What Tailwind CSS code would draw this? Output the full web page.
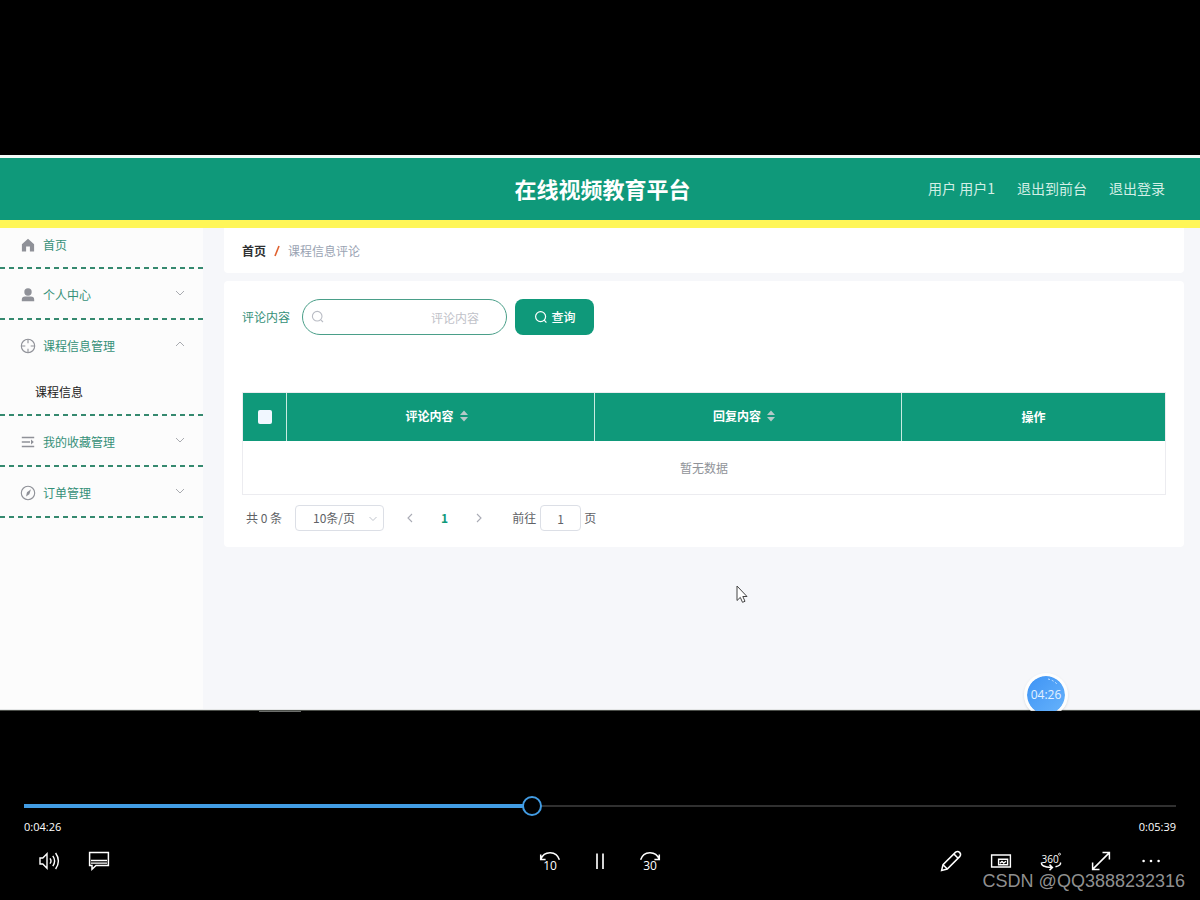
<!DOCTYPE html>
<html lang="zh-CN">
<head>
<meta charset="utf-8">
<meta name="viewport" content="width=device-width, initial-scale=1">
<title>在线视频教育平台</title>
<script src="https://cdn.jsdelivr.net/npm/@tailwindcss/browser@4"></script>
</head>
<body class="flex min-h-screen flex-col bg-black pt-[155px] font-['Noto_Sans_CJK_SC',sans-serif] text-xs">

<!-- Video picture -->
<section class="relative flex flex-col overflow-hidden border-t-3 border-[#f4fbf9] bg-[#f6f7fa]">
  <header class="grid h-[62px] grid-cols-[1fr_auto_1fr] items-center bg-[#0f997a] pb-0.5 pr-[35px] text-white">
    <span></span>
    <h1 class="ml-10 text-[22px] font-bold leading-8">在线视频教育平台</h1>
    <nav class="flex justify-end gap-[22px] text-sm text-[#d3efe6]">
      <span>用户 用户1</span>
      <a href="#">退出到前台</a>
      <a href="#">退出登录</a>
    </nav>
  </header>
  <div class="h-2 bg-[#fff658]"></div>

  <div class="flex min-h-[482px] border-b border-[#e4e6e6]">
    <aside class="w-[203px] shrink-0 bg-[#fcfcfc] text-[#359078]">
      <a href="#" class="flex h-[39px] items-center gap-[7px] pb-1.5 pl-5">
        <svg class="size-4 text-[#8f9198]" viewBox="0 0 16 16" fill="currentColor"><path d="M8 1.8 1.9 7.3V14.4H6.1V9.6H9.9V14.4H14.1V7.3Z"/></svg>
        <span>首页</span>
      </a>
      <div class="h-0.5 bg-[repeating-linear-gradient(90deg,#35896f_0_5px,transparent_5px_9px)]"></div>
      <button type="button" class="flex h-[49px] w-full items-center gap-[7px] pl-5 pr-[18px] pt-0.5 text-left">
        <svg class="size-4 text-[#8f9198]" viewBox="0 0 16 16" fill="currentColor"><circle cx="8" cy="5" r="3.7"/><path d="M1.8 14.2V12.8Q1.8 9.6 5.2 9.6H10.8Q14.2 9.6 14.2 12.8V14.2Z"/></svg>
        <span>个人中心</span>
        <svg class="mb-1 ml-auto h-2 w-2.5" viewBox="0 0 10 8" fill="none" stroke="#a9abb0"><path d="M1 2 5 6 9 2"/></svg>
      </button>
      <div class="h-0.5 bg-[repeating-linear-gradient(90deg,#35896f_0_5px,transparent_5px_9px)]"></div>
      <button type="button" class="flex h-[50px] w-full items-center gap-[7px] pl-5 pr-[18px] pt-0.5 text-left">
        <svg class="size-4" viewBox="0 0 16 16" fill="none" stroke="#8f9198" stroke-width="1.1"><circle cx="8" cy="8" r="6.7"/><path d="M8 1.3V5.3M8 10.7V14.7M1.3 8H5.3M10.7 8H14.7"/></svg>
        <span>课程信息管理</span>
        <svg class="mb-1 ml-auto h-2 w-2.5" viewBox="0 0 10 8" fill="none" stroke="#a9abb0"><path d="M1 6 5 2 9 6"/></svg>
      </button>
      <a href="#" class="flex h-[44px] items-center pl-[35px] text-[#222]">课程信息</a>
      <div class="h-0.5 bg-[repeating-linear-gradient(90deg,#35896f_0_5px,transparent_5px_9px)]"></div>
      <button type="button" class="flex h-[49px] w-full items-center gap-[7px] pl-5 pr-[18px] pt-0.5 text-left">
        <svg class="size-4" viewBox="0 0 16 16" fill="none" stroke="#8f9198" stroke-width="1.3"><path d="M1.8 3.5H14.2M1.8 8H10M1.8 12.5H14.2"/><path fill="#8f9198" stroke="none" d="M11 5.4 13.8 8 11 10.6Z"/></svg>
        <span>我的收藏管理</span>
        <svg class="mb-1 ml-auto h-2 w-2.5" viewBox="0 0 10 8" fill="none" stroke="#a9abb0"><path d="M1 2 5 6 9 2"/></svg>
      </button>
      <div class="h-0.5 bg-[repeating-linear-gradient(90deg,#35896f_0_5px,transparent_5px_9px)]"></div>
      <button type="button" class="flex h-[49px] w-full items-center gap-[7px] pl-5 pr-[18px] pt-0.5 text-left">
        <svg class="size-4" viewBox="0 0 16 16" fill="none" stroke="#8f9198" stroke-width="1.1"><circle cx="8" cy="8" r="6.7"/><path fill="#8f9198" stroke="none" d="M11 4.2 9.3 9.2 6 11.6 7 7.3Z"/></svg>
        <span>订单管理</span>
        <svg class="mb-1 ml-auto h-2 w-2.5" viewBox="0 0 10 8" fill="none" stroke="#a9abb0"><path d="M1 2 5 6 9 2"/></svg>
      </button>
      <div class="h-0.5 bg-[repeating-linear-gradient(90deg,#35896f_0_5px,transparent_5px_9px)]"></div>
    </aside>

    <main class="flex flex-1 flex-col gap-2 pl-[21px] pr-4">
      <nav aria-label="面包屑" class="flex h-[45px] items-center gap-2 rounded-b-sm bg-white px-[18px]">
        <a href="#" class="font-bold text-[#303133]">首页</a>
        <svg class="h-3 w-1.5" viewBox="0 0 6 12" fill="none" stroke="#e0602e" stroke-width="1.6"><path d="M5 1 1 11"/></svg>
        <span class="text-[#9aa3b3]">课程信息评论</span>
      </nav>

      <section class="rounded-sm bg-white px-[18px] pb-4 pt-[18px]">
        <form class="flex items-center" onsubmit="return false">
          <label for="q" class="mr-3 text-[#359078]">评论内容</label>
          <div class="relative mr-2">
            <svg class="absolute left-2 top-2.5 size-4" viewBox="0 0 16 16" fill="none" stroke="#b9bcc4" stroke-width="1.1"><circle cx="7.2" cy="7.2" r="4.8"/><path d="M10.8 10.8 13 13"/></svg>
            <input id="q" type="text" placeholder="评论内容" class="h-9 w-[205px] rounded-full border border-[#4a9f89] bg-white pl-8 pr-[27px] text-right outline-none placeholder:text-[#bfc2c9]">
          </div>
          <button type="submit" class="flex h-9 w-[79px] items-center justify-center gap-1 rounded-lg bg-[#0f997a] text-white">
            <svg class="size-3.5" viewBox="0 0 14 14" fill="none" stroke="#fff" stroke-width="1.2"><circle cx="6.6" cy="6.6" r="5"/><path d="M10.2 10.2 12.4 12.6"/></svg>
            <span class="font-medium">查询</span>
          </button>
        </form>

        <table class="mt-[57px] w-full table-fixed border-separate border-spacing-0 border border-[#ececf0] text-center">
          <colgroup><col class="w-[44px]"><col class="w-[308px]"><col class="w-[307px]"><col></colgroup>
          <thead class="bg-[#0f997a] text-white">
            <tr class="h-12">
              <th class="border-r border-[#c9ebe1]"><input type="checkbox" aria-label="全选" class="mx-auto block size-3.5 appearance-none rounded-xs bg-[#f1f7ff]"></th>
              <th class="border-r border-[#c9ebe1] pb-0.5 pr-2 font-bold"><span class="inline-flex items-center gap-1.5">评论内容<svg class="h-3 w-2" viewBox="0 0 8 12" fill="#b4c9c8"><path d="M4 .5 8 5H0ZM0 7H8L4 11.5Z"/></svg></span></th>
              <th class="border-r border-[#c9ebe1] pb-0.5 pr-2 font-bold"><span class="inline-flex items-center gap-1.5">回复内容<svg class="h-3 w-2" viewBox="0 0 8 12" fill="#b4c9c8"><path d="M4 .5 8 5H0ZM0 7H8L4 11.5Z"/></svg></span></th>
              <th class="font-bold">操作</th>
            </tr>
          </thead>
          <tbody>
            <tr class="h-[53px]"><td colspan="4" class="text-[#909399]">暂无数据</td></tr>
          </tbody>
        </table>

        <div class="mt-2.5 flex items-center pl-1 text-[#606266]">
          <span class="mr-[13px]">共 0 条</span>
          <div class="relative">
            <select aria-label="每页条数" class="block h-[26px] w-[89px] appearance-none rounded-sm border border-[#dcdfe6] bg-white pl-[17px]"><option>10条/页</option></select>
            <svg class="pointer-events-none absolute right-1.5 top-2.5 h-2 w-2.5" viewBox="0 0 10 8" fill="none" stroke="#c0c4cc"><path d="M1.5 2 5 5.5 8.5 2"/></svg>
          </div>
          <button type="button" aria-label="上一页" class="ml-[21px]"><svg class="size-2.5" viewBox="0 0 10 10" fill="none" stroke="#a9abb5" stroke-width="1.1"><path d="M7 1 3 5 7 9"/></svg></button>
          <button type="button" class="mx-[26px] font-bold text-[#0f997a]">1</button>
          <button type="button" aria-label="下一页"><svg class="size-2.5" viewBox="0 0 10 10" fill="none" stroke="#a9abb5" stroke-width="1.1"><path d="M3 1 7 5 3 9"/></svg></button>
          <label for="page" class="ml-7 mr-1">前往</label>
          <input id="page" type="text" value="1" class="h-[26px] w-[41px] rounded-sm border border-[#dcdfe6] bg-white text-center">
          <span class="ml-[3px]">页</span>
        </div>
      </section>
    </main>
  </div>
  <div class="h-px bg-[#4b4e49]"></div>

  <!-- Mouse pointer and floating recorder clock -->
  <svg class="absolute left-[736px] top-[427px] h-[19px] w-3" viewBox="0 0 12 19" fill="#fff" stroke="#444"><path d="M1 1V15.5L4.3 12.4 6.5 17.3 9 16.3 6.8 11.5H11Z"/></svg>
  <div class="absolute right-[132px] top-[515px] flex size-11 items-center justify-center rounded-full border-3 border-white/80 bg-linear-to-br from-[#3d93f5] to-[#67b3fb] bg-clip-padding text-[#e4f2ff] shadow">
    <svg class="absolute right-1.5 top-0.5 h-2 w-3" viewBox="0 0 12 8" fill="none" stroke="#cfe6ff" stroke-dasharray="2 2"><path d="M1 1Q6 2 10 6"/></svg>
    <span class="font-['Open_Sans',sans-serif] text-xs">04:26</span>
  </div>
</section>
<div class="ml-[259px] h-px w-[42px] bg-[#6b6d6b]"></div>

<!-- Player controls -->
<footer class="mt-[84px] px-6 font-['Open_Sans',sans-serif] text-white">
  <input type="range" aria-label="播放进度" min="0" max="605" value="266" class="block h-5 w-full appearance-none bg-[linear-gradient(#429ce3,#429ce3),linear-gradient(#303030,#303030)] bg-[length:44%_4px,100%_2px] bg-[position:left_center] bg-no-repeat [&::-webkit-slider-thumb]:size-5 [&::-webkit-slider-thumb]:appearance-none [&::-webkit-slider-thumb]:rounded-full [&::-webkit-slider-thumb]:border-2 [&::-webkit-slider-thumb]:border-[#429ce3] [&::-webkit-slider-thumb]:bg-black">
  <div class="flex h-[22px] items-center justify-between text-[11px]"><span>0:04:26</span><span>0:05:39</span></div>
  <div class="mt-[3px] grid grid-cols-3">
    <div class="flex">
      <button type="button" aria-label="音量" class="flex h-10 w-[50px] items-center justify-center">
        <svg class="size-6" viewBox="0 0 24 24" fill="none" stroke="#fff" stroke-width="1.4"><path d="M3 9H5.8L10 4.8V19.2L5.8 15H3Z"/><path d="M13 9.3Q15 12 13 14.7M15.8 6.8Q19.4 12 15.8 17.2M18.6 4Q24.2 12 18.6 20"/></svg>
      </button>
      <button type="button" aria-label="字幕" class="flex h-10 w-[50px] items-center justify-center">
        <svg class="size-6" viewBox="0 0 24 24" fill="none" stroke="#fff" stroke-width="1.5"><path d="M2.6 3.6H21.4V16.4H9L5 20.2V16.4H2.6Z"/><path d="M4 11.5H20M4 14.2H20" stroke-width="1.3"/></svg>
      </button>
    </div>
    <div class="flex justify-center">
      <button type="button" aria-label="后退 10 秒" class="flex h-10 w-[50px] items-center justify-center">
        <svg class="size-6" viewBox="0 0 24 24" fill="none" stroke="#fff" stroke-width="1.5"><path d="M2.8 10.2C6 1.4 18.5 1.4 21.4 10.8M2.7 5.5V10.5H7.6"/><text x="12" y="20.5" text-anchor="middle" font-size="12" fill="#fff" stroke="none">10</text></svg>
      </button>
      <button type="button" aria-label="暂停" class="flex h-10 w-[50px] items-center justify-center">
        <svg class="size-6" viewBox="0 0 24 24" stroke="#d4d4d4" stroke-width="2"><path d="M9 4.5V20M15 4.5V20"/></svg>
      </button>
      <button type="button" aria-label="前进 30 秒" class="flex h-10 w-[50px] items-center justify-center">
        <svg class="size-6" viewBox="0 0 24 24" fill="none" stroke="#fff" stroke-width="1.5"><path d="M21.2 10.2C18 1.4 5.5 1.4 2.6 10.8M21.3 5.5V10.5H16.4"/><text x="12" y="20.5" text-anchor="middle" font-size="12" fill="#fff" stroke="none">30</text></svg>
      </button>
    </div>
    <div class="flex justify-end">
      <button type="button" aria-label="编辑" class="flex h-10 w-[50px] items-center justify-center">
        <svg class="size-6" viewBox="0 0 24 24" fill="none" stroke="#fff" stroke-width="1.5"><path d="M2.6 21.4 4 15.7 16.6 3.1Q18.8 1.6 20.6 3.4T20.9 7.4L8.3 20ZM4 15.7 8.3 20M14.8 4.9 19.1 9.2"/></svg>
      </button>
      <button type="button" aria-label="迷你视图" class="flex h-10 w-[50px] items-center justify-center">
        <svg class="size-6" viewBox="0 0 24 24" fill="none" stroke="#fff" stroke-width="1.4"><path d="M2.6 6H21.4V18H2.6Z"/><path d="M9.6 10.3H18.6V15.7H9.6Z"/><path d="M11 14.2 13 12.4 14.7 14 17 12.2"/></svg>
      </button>
      <button type="button" aria-label="360 度视频" class="flex h-10 w-[50px] items-center justify-center">
        <svg class="size-6" viewBox="0 0 24 24" fill="none" stroke="#fff" stroke-width="1.5"><text x="11.2" y="14.2" text-anchor="middle" font-size="10" fill="#fff" stroke="none">360</text><circle cx="20.5" cy="5.2" r="1" stroke-width=".8"/><path d="M2.6 13.5Q1.5 18 12.5 18.4M10.5 15.6 13.4 18.4 10.5 21.2M16.5 17.8Q22.5 16.4 21.4 13.5"/></svg>
      </button>
      <button type="button" aria-label="全屏" class="flex h-10 w-[50px] items-center justify-center">
        <svg class="size-6" viewBox="0 0 24 24" fill="none" stroke="#fff" stroke-width="1.5"><path d="M3.6 20.4 20.4 3.6M13.5 3.6H20.4V10.5M3.6 13.5V20.4H10.5"/></svg>
      </button>
      <button type="button" aria-label="更多" class="flex h-10 w-[50px] items-center justify-center">
        <svg class="size-6" viewBox="0 0 24 24" fill="#fff"><circle cx="4.6" cy="12" r="1.3"/><circle cx="12" cy="12" r="1.3"/><circle cx="19.6" cy="12" r="1.3"/></svg>
      </button>
    </div>
  </div>
</footer>
<p class="absolute bottom-[7px] right-[15px] font-['Liberation_Sans',sans-serif] text-lg leading-6 text-[#a3a3a3]/90">CSDN @QQ3888232316</p>
</body>
</html>
